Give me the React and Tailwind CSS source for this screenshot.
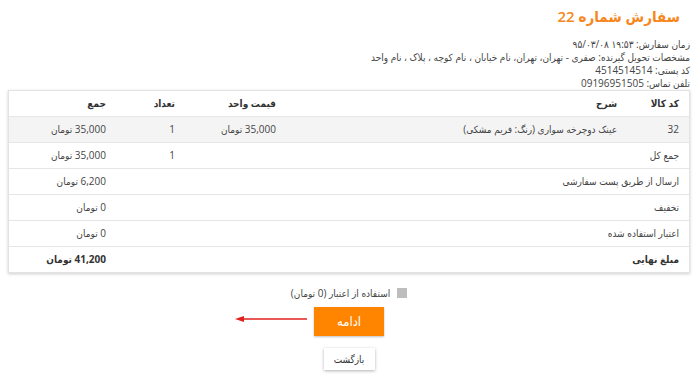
const FONT = { fontFamily: '"Open Sans", "DejaVu Sans Condensed", "DejaVu Sans", sans-serif' };

const ROWS = [
  { code: '32', desc: 'عینک دوچرخه سواری (رنگ: فریم مشکی)', price: '35,000 تومان', qty: '1', total: '35,000 تومان', striped: true },
  { desc: 'جمع کل', qty: '1', total: '35,000 تومان', span: true },
  { desc: 'ارسال از طریق پست سفارشی', total: '6,200 تومان', span: true },
  { desc: 'تخفیف', total: '0 تومان', span: true },
  { desc: 'اعتبار استفاده شده', total: '0 تومان', span: true },
  { desc: 'مبلغ نهایی', total: '41,200 تومان', span: true, bold: true },
];

export default function App() {
  return (
    <div dir="rtl" className="w-[700px] h-[376px] bg-white text-[#444] pl-[8px] pr-[10px] overflow-hidden" style={FONT}>
      {/* Title */}
      <h1 className="text-[15px] leading-[20px] font-semibold text-[#f7861c] pt-[6px] pr-[10px]">سفارش شماره 22</h1>

      {/* Order info */}
      <div className="mt-[12px] text-[10px] leading-[13px] text-[#444]">
        <div>زمان سفارش: ۱۹:۵۳ ۹۵/۰۳/۰۸</div>
        <div>مشخصات تحویل گیرنده: صفری - تهران، تهران، نام خیابان ، نام کوچه ، پلاک ، نام واحد</div>
        <div>کد پستی: 4514514514</div>
        <div>تلفن تماس: 09196951505</div>
      </div>

      {/* Order table */}
      <div className="border border-[#e3e3e3] shadow-[0_1px_3px_rgba(0,0,0,0.2)] bg-white">
        <table className="w-full border-collapse text-[10px]">
          <thead>
            <tr className="h-[25px] text-[#333] font-bold">
              <th className="w-[62px] text-right pr-[10px] font-bold">کد کالا</th>
              <th className="text-right pr-[10px] font-bold">شرح</th>
              <th className="w-[101px] text-right pr-[10px] font-bold">قیمت واحد</th>
              <th className="w-[69px] text-right pr-[10px] font-bold">تعداد</th>
              <th className="w-[107px] text-right pr-[10px] font-bold">جمع</th>
            </tr>
          </thead>
          <tbody>
            {ROWS.map((r, i) =>
              r.span ? (
                <tr key={i} className={`h-[26px] border-t border-[#e6e6e6] ${r.bold ? 'font-bold text-[#333]' : ''}`}>
                  <td colSpan={3} className="pr-[10px] text-right">{r.desc}</td>
                  <td className="pr-[10px] text-right">{r.qty || ''}</td>
                  <td className="pr-[10px] text-right">{r.total}</td>
                </tr>
              ) : (
                <tr key={i} className="h-[26px] border-t border-[#e6e6e6] bg-[#f4f4f4]">
                  <td className="pr-[10px] text-right">{r.code}</td>
                  <td className="pr-[10px] text-right">{r.desc}</td>
                  <td className="pr-[10px] text-right">{r.price}</td>
                  <td className="pr-[10px] text-right">{r.qty}</td>
                  <td className="pr-[10px] text-right">{r.total}</td>
                </tr>
              )
            )}
          </tbody>
        </table>
      </div>

      {/* Credit checkbox */}
      <div className="mt-[13px] flex justify-center items-center gap-[7px] text-[10px] leading-[14px] text-[#444]">
        <span className="w-[10px] h-[10px] bg-[#bdbdbd] block"></span>
        <span>استفاده از اعتبار (0 تومان)</span>
      </div>

      {/* Actions */}
      <div className="mt-[7px] flex flex-col items-center">
        <div className="relative">
          <button className="w-[70px] h-[29px] bg-[#ff8400] text-white text-[13px] shadow-[0_1px_2px_rgba(0,0,0,0.25)]">ادامه</button>
          <svg className="absolute top-[7px] left-[-80px]" width="76" height="10" viewBox="0 0 76 10">
            <line x1="8" y1="5" x2="73" y2="5" stroke="#e0201c" strokeWidth="1.3" />
            <polygon points="1,5 10,2 10,8" fill="#e0201c" />
          </svg>
        </div>
        <button className="mt-[12px] w-[51px] h-[22px] bg-white text-[#333] text-[10px] shadow-[0_1px_3px_rgba(0,0,0,0.3)]">بازگشت</button>
      </div>
    </div>
  );
}
